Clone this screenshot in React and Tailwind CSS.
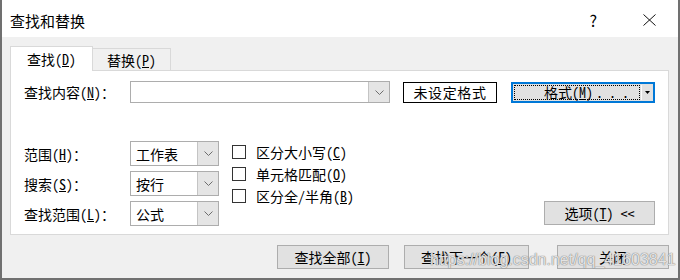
const cjk = "font-['Noto_Sans_Mono_CJK_SC','Noto_Sans_CJK_SC',sans-serif]";

function Chevron() {
	return (
		<svg width="9" height="5" viewBox="0 0 9 5" className="block">
			<path d="M0.5 0.5 L4.5 4.5 L8.5 0.5" fill="none" stroke="#6d6d6d" strokeWidth="1" />
		</svg>
	);
}

function Combo({width, height, text}) {
	return (
		<div className={`${width} ${height} flex bg-white border border-[#adadad]`}>
			<div className="flex-1 flex items-center pl-[5px] text-[14px] leading-none">{text}</div>
			<div className="w-[21px] flex items-center justify-center bg-[#e5e5e5] border-l border-[#c4c4c4]">
				<Chevron />
			</div>
		</div>
	);
}

function Check({children}) {
	return (
		<div className="flex items-center h-[13px] gap-[10px]">
			<div className="w-[14px] h-[14px] bg-white border border-[#333333]"></div>
			<span className="text-[14px] leading-none whitespace-nowrap">{children}</span>
		</div>
	);
}

function Button({width, children}) {
	return (
		<div className={`${width} h-[24px] flex items-center justify-center bg-[#e1e1e1] border border-[#adadad] text-[14px] leading-none`}>
			{children}
		</div>
	);
}

export default function App() {
	return (
		<div className={`relative w-[680px] h-[280px] flex flex-col border-x-2 border-b-2 border-[#707070] text-black ${cjk}`}>
			{/* title bar */}
			<div className="h-[37px] shrink-0 bg-white flex items-center pl-[8px] pr-[22px] pt-[3px]">
				<span className="font-['Noto_Sans_CJK_SC',sans-serif] text-[15px] leading-none">查找和替换</span>
				<span className="ml-auto font-['Noto_Sans_CJK_SC',sans-serif] text-[16px] leading-none">?</span>
				<svg width="13" height="12" viewBox="0 0 13 12" className="ml-[46px]">
					<path d="M0.5 0.5 L12.5 11.5 M12.5 0.5 L0.5 11.5" stroke="#111" strokeWidth="1" />
				</svg>
			</div>

			{/* body */}
			<div className="flex-1 bg-[#f0f0f0] pl-[8px] pr-[9px] pt-[9px]">
				<div className="flex items-end h-[24px]">
					<div className="relative z-10 w-[83px] h-[25px] -mb-px bg-white border border-b-0 border-[#d9d9d9] flex items-center justify-center text-[14px] leading-none">
						查找(<u>D</u>)
					</div>
					<div className="w-[79px] h-[22px] -ml-px border border-b-0 border-[#d9d9d9] flex items-center justify-center text-[14px] leading-none">
						替换(<u>P</u>)
					</div>
				</div>

				<div className="h-[165px] bg-white border border-[#d9d9d9] pl-[13px] pr-[13px] pt-[10px] flex flex-col">
					<div className="flex items-center">
						<div className="w-[106px] text-[14px] leading-none">查找内容(<u>N</u>)：</div>
						<Combo width="w-[260px]" height="h-[22px]" text="" />
						<div className="ml-[13px] w-[94px] h-[21px] border border-black flex items-center justify-center text-[14px] tracking-[0.6px] leading-none">
							未设定格式
						</div>
						<div className="ml-[14px] w-[144px] h-[21px] flex bg-[#e1e1e1] border-2 border-[#0078d7] p-[1px]">
							<div className="flex-1 flex items-center pl-[29px] border border-dotted border-black text-[14px] leading-none whitespace-nowrap">
								格式(<u>M</u>)<span className="tracking-[6px] ml-[3px]">...</span>
							</div>
							<div className="w-px ml-[1px] bg-[#fbfbfb]"></div>
							<div className="w-[10px] flex items-center justify-center">
								<svg width="5" height="3" viewBox="0 0 5 3"><path d="M0 0 L5 0 L2.5 3 Z" fill="#000" /></svg>
							</div>
						</div>
					</div>

					<div className="mt-[38px] flex items-end">
						<div className="grid grid-cols-[106px_89px] gap-y-[5px] items-center">
							<div className="text-[14px] leading-none">范围(<u>H</u>)：</div>
							<Combo width="w-[89px]" height="h-[25px]" text="工作表" />
							<div className="text-[14px] leading-none">搜索(<u>S</u>)：</div>
							<Combo width="w-[89px]" height="h-[25px]" text="按行" />
							<div className="text-[14px] leading-none">查找范围(<u>L</u>)：</div>
							<Combo width="w-[89px]" height="h-[25px]" text="公式" />
						</div>
						<div className="self-start ml-[13px] mt-[4px] flex flex-col gap-[9px]">
							<Check>区分大小写(<u>C</u>)</Check>
							<Check>单元格匹配(<u>O</u>)</Check>
							<Check>区分全/半角(<u>B</u>)</Check>
						</div>
						<div className="ml-auto mb-px">
							<Button width="w-[111px]">选项(<u>T</u>)&nbsp;&lt;&lt;</Button>
						</div>
					</div>
				</div>

				<div className="mt-[10px] flex justify-end">
					<Button width="w-[112px]">查找全部(<u>I</u>)</Button>
					<div className="ml-[15px]"><Button width="w-[125px]">查找下一个(<u>F</u>)</Button></div>
					<div className="ml-[28px]"><Button width="w-[112px]">关闭</Button></div>
				</div>
			</div>

			{/* watermark */}
			<div className="absolute left-[428px] top-[251px] font-['Liberation_Sans',Arial,sans-serif] text-[16px] leading-[18px] text-white/80 [text-shadow:0_0_1px_#6a6a6a,0_0_1px_#8a8a8a] whitespace-nowrap pointer-events-none">
				https://blog.csdn.net/qq_41603841
			</div>
		</div>
	);
}
